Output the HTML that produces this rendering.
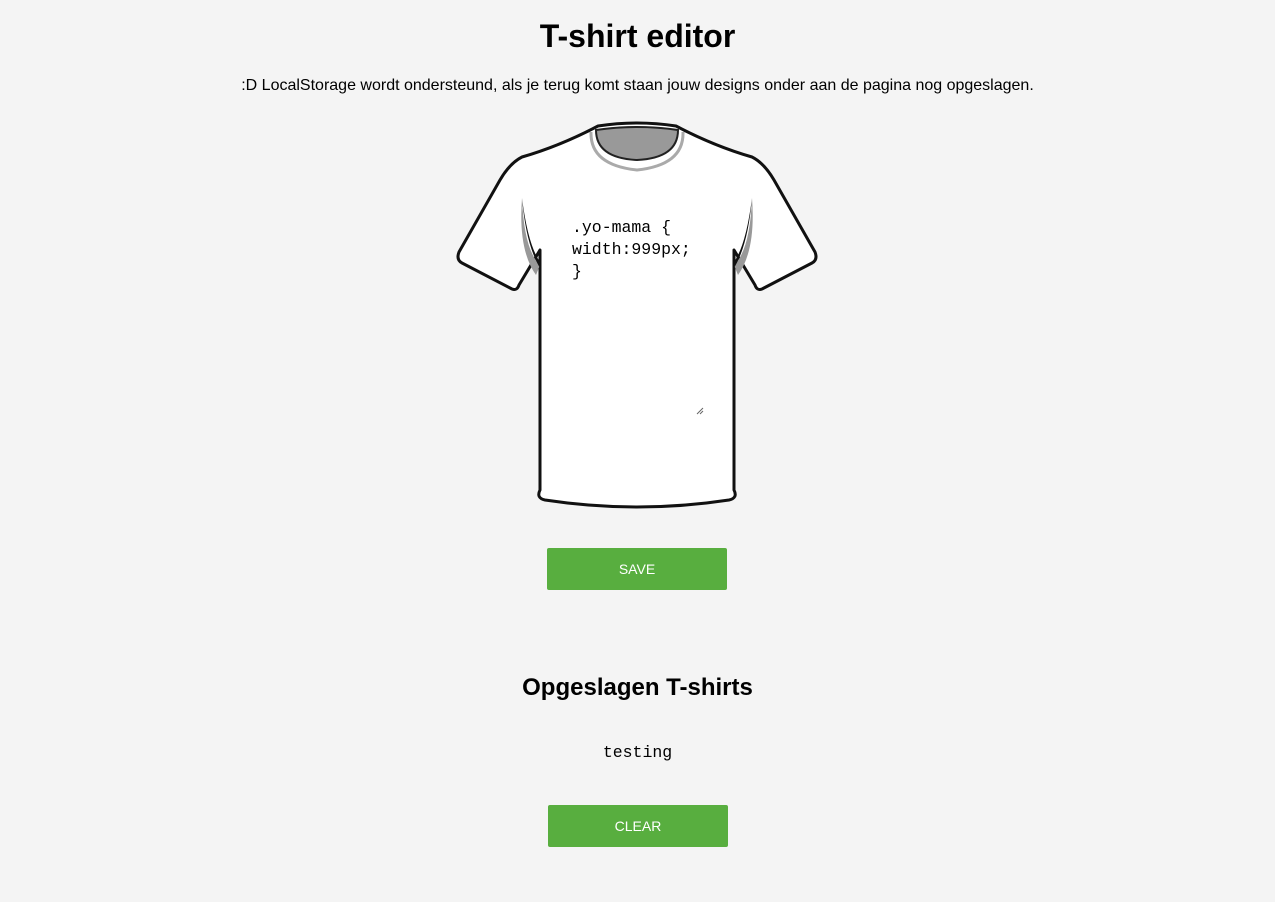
<!DOCTYPE html>
<html><head><meta charset="utf-8"><style>
body{margin:0;background:#f4f4f4;font-family:"Liberation Sans",Arial,sans-serif;color:#000;width:1275px;height:902px;overflow:hidden;position:relative}
h1{position:absolute;top:18px;left:0;width:1275px;text-align:center;font-size:32px;font-weight:bold;margin:0}
p.info{position:absolute;top:77px;left:0;width:1275px;text-align:center;font-size:16px;margin:0}
.code{position:absolute;left:572px;top:217px;font-family:"Liberation Mono",monospace;font-size:16.5px;line-height:22px;white-space:pre}
.btn{position:absolute;background:#58ae3f;color:#fff;font-size:14px;text-align:center;line-height:42px;height:42px;border-radius:2px}
h2{position:absolute;top:674px;left:0;width:1275px;text-align:center;font-size:24px;margin:0}
.t{position:absolute;top:743px;left:0;width:1275px;text-align:center;font-family:"Liberation Mono",monospace;font-size:16.5px}
</style></head><body>
<h1>T-shirt editor</h1>
<p class="info">:D LocalStorage wordt ondersteund, als je terug komt staan jouw designs onder aan de pagina nog opgeslagen.</p>
<svg width="1275" height="902" style="position:absolute;left:0;top:0">
<path d="M598,126 Q560,146 522,157 Q510,163 500,180 L459,252 Q456,260 462,263 L512,289 Q517,291 519,285 L540,250 L540,490 Q536,498 545,500 Q637,514 729,500 Q738,498 734,490 L734,250 L755,285 Q757,291 762,289 L812,263 Q818,260 815,252 L774,180 Q764,163 752,157 Q714,146 676,126 Q637,120 598,126 Z" fill="#fff" stroke="#111" stroke-width="3" stroke-linejoin="round"/>
<path d="M591,132 Q590,165 637,170 Q684,165 683,132" fill="none" stroke="#aaa" stroke-width="3"/>
<path d="M596,130 Q596,158 637,160 Q678,158 678,130 Q637,124 596,130Z" fill="#999" stroke="#222" stroke-width="2"/>
<path d="M522,198 Q524,250 540,265 L536,275 Q518,250 522,198Z" fill="#999"/>
<path d="M522,198 Q528,245 540,262 L540,268 Q526,245 522,198Z" fill="#111"/>
<path d="M752,198 Q750,250 734,265 L738,275 Q756,250 752,198Z" fill="#999"/>
<path d="M752,198 Q746,245 734,262 L734,268 Q748,245 752,198Z" fill="#111"/>
<path d="M697,414 L703,408 M700,414 L703,411" stroke="#666" stroke-width="1"/>
</svg>
<div class="code">.yo-mama {
width:999px;
}</div>
<div class="btn" style="left:547px;top:548px;width:180px">SAVE</div>
<h2>Opgeslagen T-shirts</h2>
<div class="t">testing</div>
<div class="btn" style="left:548px;top:805px;width:180px">CLEAR</div>
</body></html>
